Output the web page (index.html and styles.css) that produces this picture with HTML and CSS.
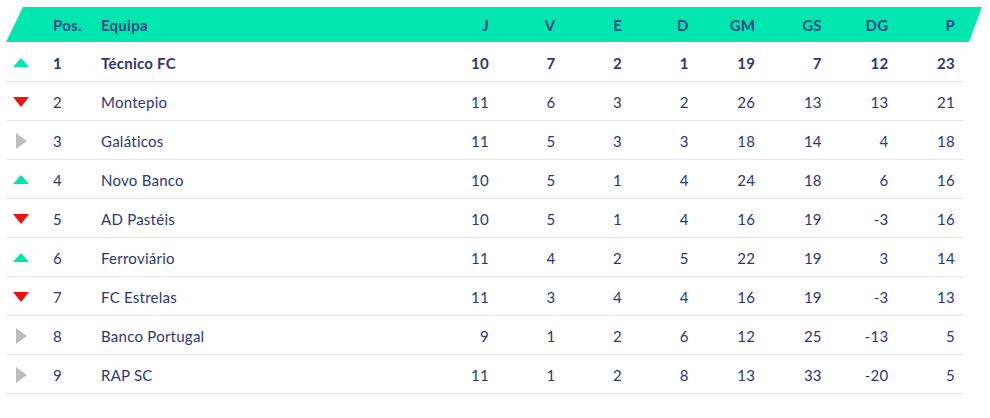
FILE: index.html
```html
<!DOCTYPE html>
<html lang="pt">
<head>
<meta charset="utf-8">
<title>Classificação</title>
<link rel="stylesheet" href="styles.css">
</head>
<body>
<div class="standings">
  <div class="row head">
    <span class="c-ico"></span><span class="c-pos">Pos.</span><span class="c-team">Equipa</span>
    <span class="n">J</span><span class="n">V</span><span class="n">E</span><span class="n">D</span><span class="n">GM</span><span class="n">GS</span><span class="n">DG</span><span class="n">P</span>
  </div>
  <div class="row lead">
    <span class="c-ico"><i class="tri up"></i></span><span class="c-pos">1</span><span class="c-team">Técnico FC</span>
    <span class="n">10</span><span class="n">7</span><span class="n">2</span><span class="n">1</span><span class="n">19</span><span class="n">7</span><span class="n">12</span><span class="n">23</span>
  </div>
  <div class="row">
    <span class="c-ico"><i class="tri down"></i></span><span class="c-pos">2</span><span class="c-team">Montepio</span>
    <span class="n">11</span><span class="n">6</span><span class="n">3</span><span class="n">2</span><span class="n">26</span><span class="n">13</span><span class="n">13</span><span class="n">21</span>
  </div>
  <div class="row">
    <span class="c-ico"><i class="tri same"></i></span><span class="c-pos">3</span><span class="c-team">Galáticos</span>
    <span class="n">11</span><span class="n">5</span><span class="n">3</span><span class="n">3</span><span class="n">18</span><span class="n">14</span><span class="n">4</span><span class="n">18</span>
  </div>
  <div class="row">
    <span class="c-ico"><i class="tri up"></i></span><span class="c-pos">4</span><span class="c-team">Novo Banco</span>
    <span class="n">10</span><span class="n">5</span><span class="n">1</span><span class="n">4</span><span class="n">24</span><span class="n">18</span><span class="n">6</span><span class="n">16</span>
  </div>
  <div class="row">
    <span class="c-ico"><i class="tri down"></i></span><span class="c-pos">5</span><span class="c-team">AD Pastéis</span>
    <span class="n">10</span><span class="n">5</span><span class="n">1</span><span class="n">4</span><span class="n">16</span><span class="n">19</span><span class="n">-3</span><span class="n">16</span>
  </div>
  <div class="row">
    <span class="c-ico"><i class="tri up"></i></span><span class="c-pos">6</span><span class="c-team">Ferroviário</span>
    <span class="n">11</span><span class="n">4</span><span class="n">2</span><span class="n">5</span><span class="n">22</span><span class="n">19</span><span class="n">3</span><span class="n">14</span>
  </div>
  <div class="row">
    <span class="c-ico"><i class="tri down"></i></span><span class="c-pos">7</span><span class="c-team">FC Estrelas</span>
    <span class="n">11</span><span class="n">3</span><span class="n">4</span><span class="n">4</span><span class="n">16</span><span class="n">19</span><span class="n">-3</span><span class="n">13</span>
  </div>
  <div class="row">
    <span class="c-ico"><i class="tri same"></i></span><span class="c-pos">8</span><span class="c-team">Banco Portugal</span>
    <span class="n">9</span><span class="n">1</span><span class="n">2</span><span class="n">6</span><span class="n">12</span><span class="n">25</span><span class="n">-13</span><span class="n">5</span>
  </div>
  <div class="row">
    <span class="c-ico"><i class="tri same"></i></span><span class="c-pos">9</span><span class="c-team">RAP SC</span>
    <span class="n">11</span><span class="n">1</span><span class="n">2</span><span class="n">8</span><span class="n">13</span><span class="n">33</span><span class="n">-20</span><span class="n">5</span>
  </div>
</div>
</body>
</html>
```

FILE: styles.css
```css
* { box-sizing: border-box; }
html, body { margin: 0; padding: 0; background: #ffffff; }
body {
  font-family: Lato, "Noto Sans", "Liberation Sans", sans-serif;
  font-size: 15px;
  letter-spacing: 0.25px;
  color: #2c3775;
}
.standings {
  padding: 7px 8px 0 6px;
}
.row {
  display: grid;
  grid-template-columns: 47px 48px 1fr repeat(8, 66.6px);
  align-items: center;
  height: 39px;
  padding-right: 8px;
  padding-top: 1px;
  margin-right: 19px;
  border-bottom: 1px solid #e4e4e4;
}
.row.head {
  height: 35px;
  margin-right: 0;
  margin-bottom: 1px;
  padding-top: 0;
  padding-right: 27px;
  border-bottom: none;
  background: #00e6b0;
  clip-path: polygon(17px 0, 100% 0, calc(100% - 13px) 100%, 0 100%);
  color: #1e4b80;
  font-weight: 700;
}
.row.lead { font-weight: 700; }
.n { text-align: right; }
.c-ico { display: flex; align-items: center; padding-left: 7px; }
.tri { display: block; width: 0; height: 0; }
.tri.up {
  border-left: 8.5px solid transparent;
  border-right: 8.5px solid transparent;
  border-bottom: 9px solid #00e6b0;
}
.tri.down {
  border-left: 8px solid transparent;
  border-right: 8px solid transparent;
  border-top: 10px solid #ee1111;
}
.tri.same {
  border-top: 8px solid transparent;
  border-bottom: 8px solid transparent;
  border-left: 11px solid #bdbdbd;
  margin-left: 3px;
}
```
